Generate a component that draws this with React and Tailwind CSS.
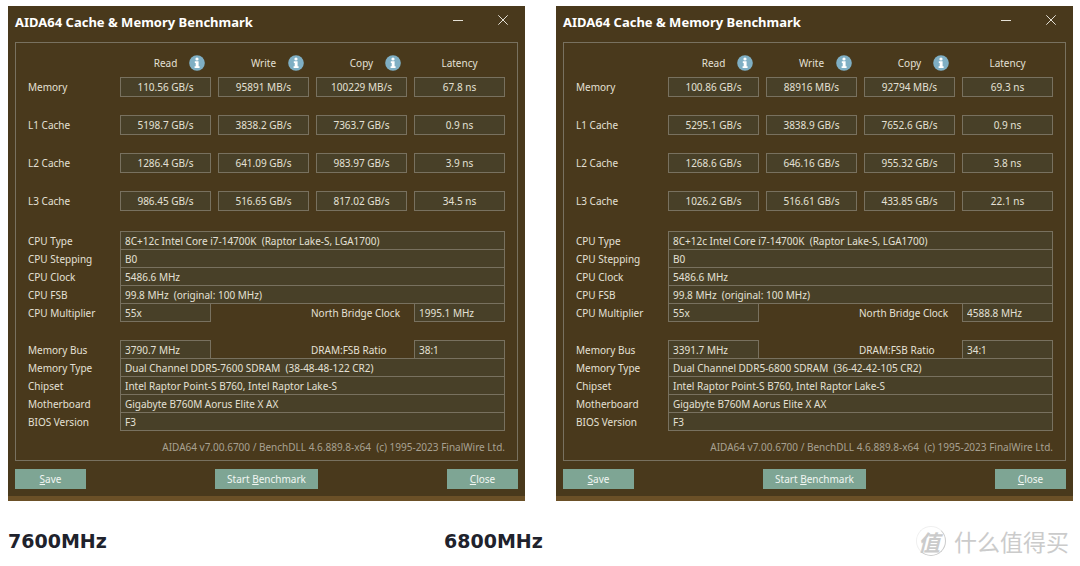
import React from "react";

const COLUMNS = ["Read", "Write", "Copy", "Latency"];

const RESULTS = [
  {
    id: "a",
    measures: [
      ["Memory", "110.56 GB/s", "95891 MB/s", "100229 MB/s", "67.8 ns"],
      ["L1 Cache", "5198.7 GB/s", "3838.2 GB/s", "7363.7 GB/s", "0.9 ns"],
      ["L2 Cache", "1286.4 GB/s", "641.09 GB/s", "983.97 GB/s", "3.9 ns"],
      ["L3 Cache", "986.45 GB/s", "516.65 GB/s", "817.02 GB/s", "34.5 ns"],
    ],
    cpu: [
      ["CPU Type", "8C+12c Intel Core i7-14700K  (Raptor Lake-S, LGA1700)"],
      ["CPU Stepping", "B0"],
      ["CPU Clock", "5486.6 MHz"],
      ["CPU FSB", "99.8 MHz  (original: 100 MHz)"],
      ["CPU Multiplier", "55x", "North Bridge Clock", "1995.1 MHz"],
    ],
    board: [
      ["Memory Bus", "3790.7 MHz", "DRAM:FSB Ratio", "38:1"],
      ["Memory Type", "Dual Channel DDR5-7600 SDRAM  (38-48-48-122 CR2)"],
      ["Chipset", "Intel Raptor Point-S B760, Intel Raptor Lake-S"],
      ["Motherboard", "Gigabyte B760M Aorus Elite X AX"],
      ["BIOS Version", "F3"],
    ],
  },
  {
    id: "b",
    measures: [
      ["Memory", "100.86 GB/s", "88916 MB/s", "92794 MB/s", "69.3 ns"],
      ["L1 Cache", "5295.1 GB/s", "3838.9 GB/s", "7652.6 GB/s", "0.9 ns"],
      ["L2 Cache", "1268.6 GB/s", "646.16 GB/s", "955.32 GB/s", "3.8 ns"],
      ["L3 Cache", "1026.2 GB/s", "516.61 GB/s", "433.85 GB/s", "22.1 ns"],
    ],
    cpu: [
      ["CPU Type", "8C+12c Intel Core i7-14700K  (Raptor Lake-S, LGA1700)"],
      ["CPU Stepping", "B0"],
      ["CPU Clock", "5486.6 MHz"],
      ["CPU FSB", "99.8 MHz  (original: 100 MHz)"],
      ["CPU Multiplier", "55x", "North Bridge Clock", "4588.8 MHz"],
    ],
    board: [
      ["Memory Bus", "3391.7 MHz", "DRAM:FSB Ratio", "34:1"],
      ["Memory Type", "Dual Channel DDR5-6800 SDRAM  (36-42-42-105 CR2)"],
      ["Chipset", "Intel Raptor Point-S B760, Intel Raptor Lake-S"],
      ["Motherboard", "Gigabyte B760M Aorus Elite X AX"],
      ["BIOS Version", "F3"],
    ],
  },
];

function InfoButton({ label }) {
  return (
    <button type="button" aria-label={label} className="block size-4">
      <svg viewBox="0 0 16 16" className="size-4">
        <circle cx="8" cy="8" r="7.8" fill="#7fafc4" />
        <circle cx="8" cy="4" r="1.6" fill="#fff" />
        <path d="M5.8 6.3h3.8v5h1v1.6H5.6v-1.6h1.1V7.9h-.9z" fill="#fff" />
      </svg>
    </button>
  );
}

function Measures({ rows }) {
  return (
    <table className="w-full table-fixed border-collapse">
      <colgroup>
        <col className="w-[85px]" />
        <col />
        <col />
        <col />
        <col />
      </colgroup>
      <thead>
        <tr className="h-[27px]">
          <td />
          {COLUMNS.map((name) => (
            <th key={name} scope="col" className="p-0 pb-0.5 pl-[7px] font-normal">
              <div className="grid grid-cols-[1fr_auto_1fr] items-center gap-3">
                <span className="col-start-2">{name}</span>
                {name !== "Latency" && <InfoButton label={`About ${name}`} />}
              </div>
            </th>
          ))}
        </tr>
      </thead>
      <tbody>
        {rows.map(([name, ...values]) => (
          <tr key={name} className="h-[38px] align-top">
            <th scope="row" className="p-0 text-left leading-5 font-normal">
              {name}
            </th>
            {values.map((value, i) => (
              <td key={COLUMNS[i]} className="p-0 pl-[7px]">
                <input
                  readOnly
                  value={value}
                  aria-label={`${name} ${COLUMNS[i]}`}
                  className="block h-5 w-full border border-[#78715f] bg-[#484028] text-center outline-none"
                />
              </td>
            ))}
          </tr>
        ))}
      </tbody>
    </table>
  );
}

function Field({ id, value, className }) {
  return (
    <input
      id={id}
      readOnly
      value={value}
      className={`h-[19px] w-full min-w-0 border border-[#78715f] bg-[#484028] px-1 outline-none ${className}`}
    />
  );
}

function Details({ prefix, rows }) {
  return (
    <div className="flex flex-col pt-px">
      {rows.map(([label, value, sideLabel, sideValue]) => {
        const id = `${prefix}-${label.replace(/\W/g, "-")}`;
        return (
          <div key={label} className="-mt-px grid grid-cols-[92px_1fr] items-center">
            <label htmlFor={id}>{label}</label>
            <div className="grid grid-cols-4 items-center gap-x-[7px]">
              <Field id={id} value={value} className={sideLabel ? "col-span-1" : "col-span-4"} />
              {sideLabel && (
                <>
                  <label htmlFor={`${id}-side`} className="col-span-2 pl-[93px] whitespace-nowrap">
                    {sideLabel}
                  </label>
                  <Field id={`${id}-side`} value={sideValue} className="col-span-1" />
                </>
              )}
            </div>
          </div>
        );
      })}
    </div>
  );
}

function ActionButton({ before = "", letter, after, className }) {
  return (
    <button type="button" className={`h-5 bg-[#7ea594] text-center text-[#f1f6f2] ${className}`}>
      {before}
      <span className="underline">{letter}</span>
      {after}
    </button>
  );
}

function BenchmarkWindow({ data }) {
  return (
    <section className="min-w-0 flex-1 border-b-[5px] border-[#6b5027] bg-[#49391c] px-[7px] pb-[7px] text-[10px] leading-4 text-[#e4e0d6]">
      <header className="flex h-9 items-start justify-between pt-1.5">
        <h2 className="text-[13px] leading-5 font-bold text-white">AIDA64 Cache &amp; Memory Benchmark</h2>
        <div className="flex gap-[31px] pr-2">
          <button type="button" aria-label="Minimize" className="h-4 w-3.5">
            <svg viewBox="0 0 14 14" className="size-3.5">
              <path d="M2 7.5h10" stroke="#e4e0d6" fill="none" />
            </svg>
          </button>
          <button type="button" aria-label="Close window" className="h-4 w-3.5">
            <svg viewBox="0 0 14 14" className="size-3.5">
              <path d="M2.3 2.3l9.4 9.4M11.7 2.3l-9.4 9.4" stroke="#e4e0d6" fill="none" />
            </svg>
          </button>
        </div>
      </header>
      <div className="border border-[#78715f] px-3 pt-[7px] pb-[5px]">
        <Measures rows={data.measures} />
        <div className="mt-0.5 flex flex-col gap-[18px]">
          <Details prefix={data.id} rows={data.cpu} />
          <Details prefix={data.id} rows={data.board} />
        </div>
        <p className="mt-2 text-right whitespace-pre text-[#a8a192]">
          {"AIDA64 v7.00.6700 / BenchDLL 4.6.889.8-x64  (c) 1995-2023 FinalWire Ltd."}
        </p>
      </div>
      <div className="mt-2 flex justify-between">
        <ActionButton letter="S" after="ave" className="w-[71px]" />
        <ActionButton before="Start " letter="B" after="enchmark" className="w-[103px]" />
        <ActionButton letter="C" after="lose" className="w-[71px]" />
      </div>
    </section>
  );
}

export default function App() {
  return (
    <main className="bg-white pt-1.5 pr-[7px] pl-2 font-['Noto_Sans','Open_Sans',sans-serif]">
      <div className="flex gap-[31px]">
        {RESULTS.map((data) => (
          <BenchmarkWindow key={data.id} data={data} />
        ))}
      </div>
      <footer className="mt-6 flex items-center justify-between">
        <div className="grid grid-cols-[436px_auto] font-['DejaVu_Sans',sans-serif] text-[19px] leading-8 font-bold text-[#20222c]">
          <h3>7600MHz</h3>
          <h3>6800MHz</h3>
        </div>
        <div className="flex items-center gap-2 pr-1 font-['Noto_Sans_CJK_SC',sans-serif] text-[#cbcbcb]">
          <span className="flex size-[30px] items-center justify-center rounded-full border border-t-[#f0f0f0] border-r-[#cbcbcb] border-b-[#cbcbcb] border-l-[#f0f0f0] pr-1 text-[22px] leading-7 font-bold italic">
            值
          </span>
          <span className="text-[23px] leading-8">什么值得买</span>
        </div>
      </footer>
    </main>
  );
}
